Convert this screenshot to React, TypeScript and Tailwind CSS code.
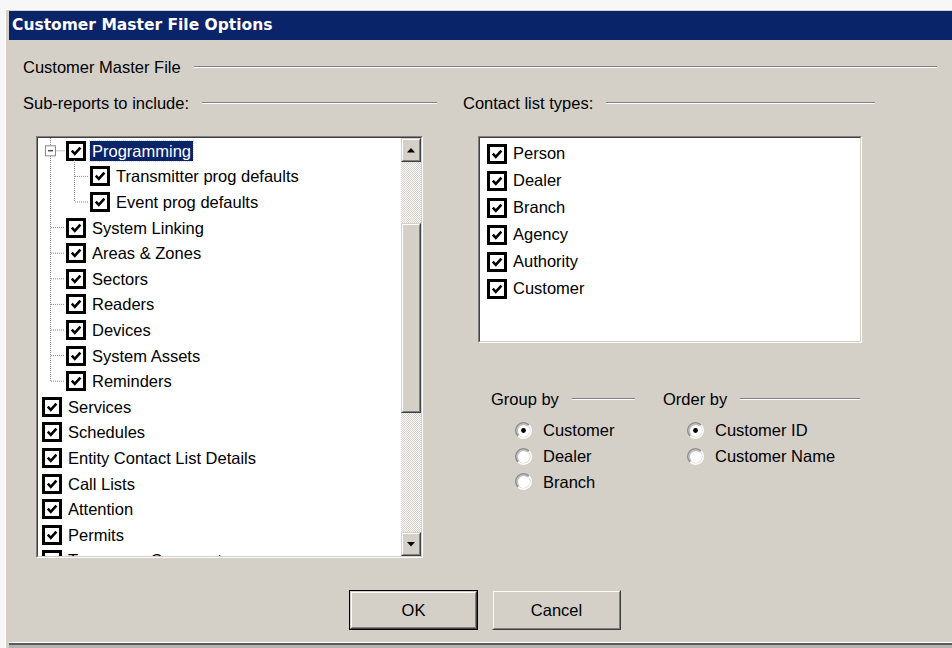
import React from 'react';

type TreeItem = { label: string; level: 0 | 1 | 2; selected?: boolean };

const treeItems: TreeItem[] = [
  { label: 'Programming', level: 1, selected: true },
  { label: 'Transmitter prog defaults', level: 2 },
  { label: 'Event prog defaults', level: 2 },
  { label: 'System Linking', level: 1 },
  { label: 'Areas & Zones', level: 1 },
  { label: 'Sectors', level: 1 },
  { label: 'Readers', level: 1 },
  { label: 'Devices', level: 1 },
  { label: 'System Assets', level: 1 },
  { label: 'Reminders', level: 1 },
  { label: 'Services', level: 0 },
  { label: 'Schedules', level: 0 },
  { label: 'Entity Contact List Details', level: 0 },
  { label: 'Call Lists', level: 0 },
  { label: 'Attention', level: 0 },
  { label: 'Permits', level: 0 },
  { label: 'Temporary Comments', level: 0 },
];

const indent: Record<number, string> = {
  0: 'pl-[4px]',
  1: 'pl-[28px]',
  2: 'pl-[52px]',
};

const contactTypes = ['Person', 'Dealer', 'Branch', 'Agency', 'Authority', 'Customer'];

const ROW = 25.6;
const rowMid = (i: number) => 12.8 + ROW * i;

function Legend({ label, className = '' }: { label: string; className?: string }) {
  return (
    <div className={`flex items-center gap-[13px] leading-[18px] ${className}`}>
      <span className="whitespace-nowrap">{label}</span>
      <span className="h-[2px] flex-1 border-y border-t-[#808080] border-b-white" />
    </div>
  );
}

function CheckBox() {
  return (
    <span className="flex h-[20px] w-[20px] shrink-0 items-center justify-center border-[3px] border-black bg-white">
      <svg viewBox="0 0 14 14" className="h-[14px] w-[14px]">
        <path d="M2.8 6.6 L5.8 9.8 L11.4 3.6" fill="none" stroke="#000" strokeWidth="2.6" />
      </svg>
    </span>
  );
}

function Radio({ on = false }: { on?: boolean }) {
  return (
    <svg viewBox="0 0 12 12" className="h-[17px] w-[17px] shrink-0">
      <circle cx="6" cy="6" r="4.6" fill="#fff" />
      <path d="M2.11 9.89 A5.5 5.5 0 0 1 9.89 2.11" fill="none" stroke="#8c8c8c" strokeWidth="1" />
      <path d="M9.89 2.11 A5.5 5.5 0 0 1 2.11 9.89" fill="none" stroke="#fff" strokeWidth="1" />
      <path d="M2.82 9.18 A4.5 4.5 0 0 1 9.18 2.82" fill="none" stroke="#bdbdbd" strokeWidth="1" />
      {on && <circle cx="6" cy="6" r="1.7" fill="#000" />}
    </svg>
  );
}

function Raised({ className = '', children }: { className?: string; children?: React.ReactNode }) {
  return (
    <div className={`border border-t-[#d4d0c8] border-l-[#d4d0c8] border-b-[#404040] border-r-[#404040] ${className}`}>
      <div className="flex h-full w-full items-center justify-center border border-t-white border-l-white border-b-[#808080] border-r-[#808080] bg-[#d4d0c8]">
        {children}
      </div>
    </div>
  );
}

function Sunken({ className = '', children }: { className?: string; children?: React.ReactNode }) {
  return (
    <div className={`border border-t-[#808080] border-l-[#808080] border-b-white border-r-white ${className}`}>
      <div className="flex h-full w-full border border-t-[#404040] border-l-[#404040] border-b-[#d4d0c8] border-r-[#d4d0c8] bg-white">
        {children}
      </div>
    </div>
  );
}

function Arrow({ down = false }: { down?: boolean }) {
  return (
    <svg viewBox="0 0 8 5" className="h-[5px] w-[8px]">
      <path d={down ? 'M0 0 H8 L4 4.5 Z' : 'M0 4.5 H8 L4 0 Z'} fill="#000" />
    </svg>
  );
}

function ScrollBar() {
  return (
    <div className="flex w-[20px] shrink-0 flex-col bg-[repeating-conic-gradient(#d4d0c8_0_25%,#ffffff_0_50%)] bg-[length:2px_2px]">
      <Raised className="h-[24px] shrink-0">
        <Arrow />
      </Raised>
      <div className="h-[61px] shrink-0" />
      <Raised className="h-[190px] shrink-0" />
      <div className="flex-1" />
      <Raised className="h-[24px] shrink-0">
        <Arrow down />
      </Raised>
    </div>
  );
}

function TreeLines() {
  const dots = { stroke: '#8a8a8a', strokeWidth: 1, strokeDasharray: '1 1', fill: 'none' };
  return (
    <svg className="pointer-events-none absolute left-0 top-0 h-[300px] w-[80px]">
      <line x1="12.5" y1="0" x2="12.5" y2="8" {...dots} />
      <line x1="12.5" y1="18" x2="12.5" y2={rowMid(9)} {...dots} />
      <line x1="17.5" y1={rowMid(0)} x2="27" y2={rowMid(0)} {...dots} />
      {[3, 4, 5, 6, 7, 8, 9].map((i) => (
        <line key={i} x1="13" y1={rowMid(i)} x2="27" y2={rowMid(i)} {...dots} />
      ))}
      <line x1="36.5" y1="22" x2="36.5" y2={rowMid(2)} {...dots} />
      {[1, 2].map((i) => (
        <line key={i} x1="37" y1={rowMid(i)} x2="51" y2={rowMid(i)} {...dots} />
      ))}
      {/* collapse box on Programming */}
      <rect x="7.5" y="7.8" width="10" height="10" fill="#fff" stroke="#8a8a8a" />
      <line x1="10" y1="12.8" x2="15" y2="12.8" stroke="#000" />
    </svg>
  );
}

function SubReportTree() {
  return (
    <Sunken className="ml-[13px] mt-[24px] h-[422px] w-[387px]">
      <div className="relative flex-1 overflow-hidden">
        <TreeLines />
        {treeItems.map((item) => (
          <div key={item.label} className={`flex h-[25.6px] items-center gap-[4px] ${indent[item.level]}`}>
            <CheckBox />
            <span
              className={`whitespace-nowrap px-[2px] leading-[20px] ${
                item.selected ? 'bg-[#0a246a] text-white outline-1 outline-dotted outline-[#e6e0a8]' : ''
              }`}
            >
              {item.label}
            </span>
          </div>
        ))}
      </div>
      <ScrollBar />
    </Sunken>
  );
}

function RadioGroup({ title, options, className = '' }: { title: string; options: string[]; className?: string }) {
  return (
    <div className={className}>
      <Legend label={title} />
      <div className="mt-[10px] pl-[24px]">
        {options.map((opt, i) => (
          <div key={opt} className="flex h-[25.6px] items-center gap-[11px]">
            <Radio on={i === 0} />
            <span>{opt}</span>
          </div>
        ))}
      </div>
    </div>
  );
}

export default function App() {
  return (
    <div className="flex h-[648px] w-[952px] flex-col overflow-hidden bg-[#f7f7f7] pl-[5px] pt-[9px] font-['Liberation_Sans',Arial,sans-serif] text-[16.5px] text-black">
      <div className="flex flex-1 flex-col border-l border-t border-white bg-[#d4d0c8] pl-[3px] pt-[1px]">
        {/* title bar */}
        <div className="flex h-[29px] shrink-0 items-center bg-[#0a246a] pl-[3px] font-['DejaVu_Sans',sans-serif] text-[15.5px] font-bold text-white">
          Customer Master File Options
        </div>

        <div className="flex flex-1 flex-col pl-[14px] pr-[15px]">
          <Legend label="Customer Master File" className="mt-[18px]" />

          <div className="mt-[18px] flex gap-[26px]">
            <div className="w-[414px]">
              <Legend label="Sub-reports to include:" />
              <SubReportTree />
            </div>

            <div className="w-[412px]">
              <Legend label="Contact list types:" />
              <Sunken className="ml-[15px] mt-[24px] h-[207px] w-[384px]">
                <div className="flex-1 pl-[7px] pt-[2px]">
                  {contactTypes.map((t) => (
                    <div key={t} className="flex h-[27px] items-center gap-[6px]">
                      <CheckBox />
                      <span>{t}</span>
                    </div>
                  ))}
                </div>
              </Sunken>

              <div className="ml-[28px] mt-[47px] flex gap-[28px]">
                <RadioGroup title="Group by" options={['Customer', 'Dealer', 'Branch']} className="w-[144px]" />
                <RadioGroup title="Order by" options={['Customer ID', 'Customer Name']} className="w-[197px]" />
              </div>
            </div>
          </div>

          {/* dialog buttons */}
          <div className="ml-[326px] mt-[32px] flex gap-[14px]">
            <div className="h-[40px] w-[129px] border border-black">
              <Raised className="h-full w-full">OK</Raised>
            </div>
            <Raised className="h-[40px] w-[129px]">Cancel</Raised>
          </div>
        </div>

        <div className="h-[6px] shrink-0 border-t border-t-white bg-[#b4b4b4]">
          <div className="h-[2px] bg-[#5a5a5a]" />
        </div>
      </div>
    </div>
  );
}
